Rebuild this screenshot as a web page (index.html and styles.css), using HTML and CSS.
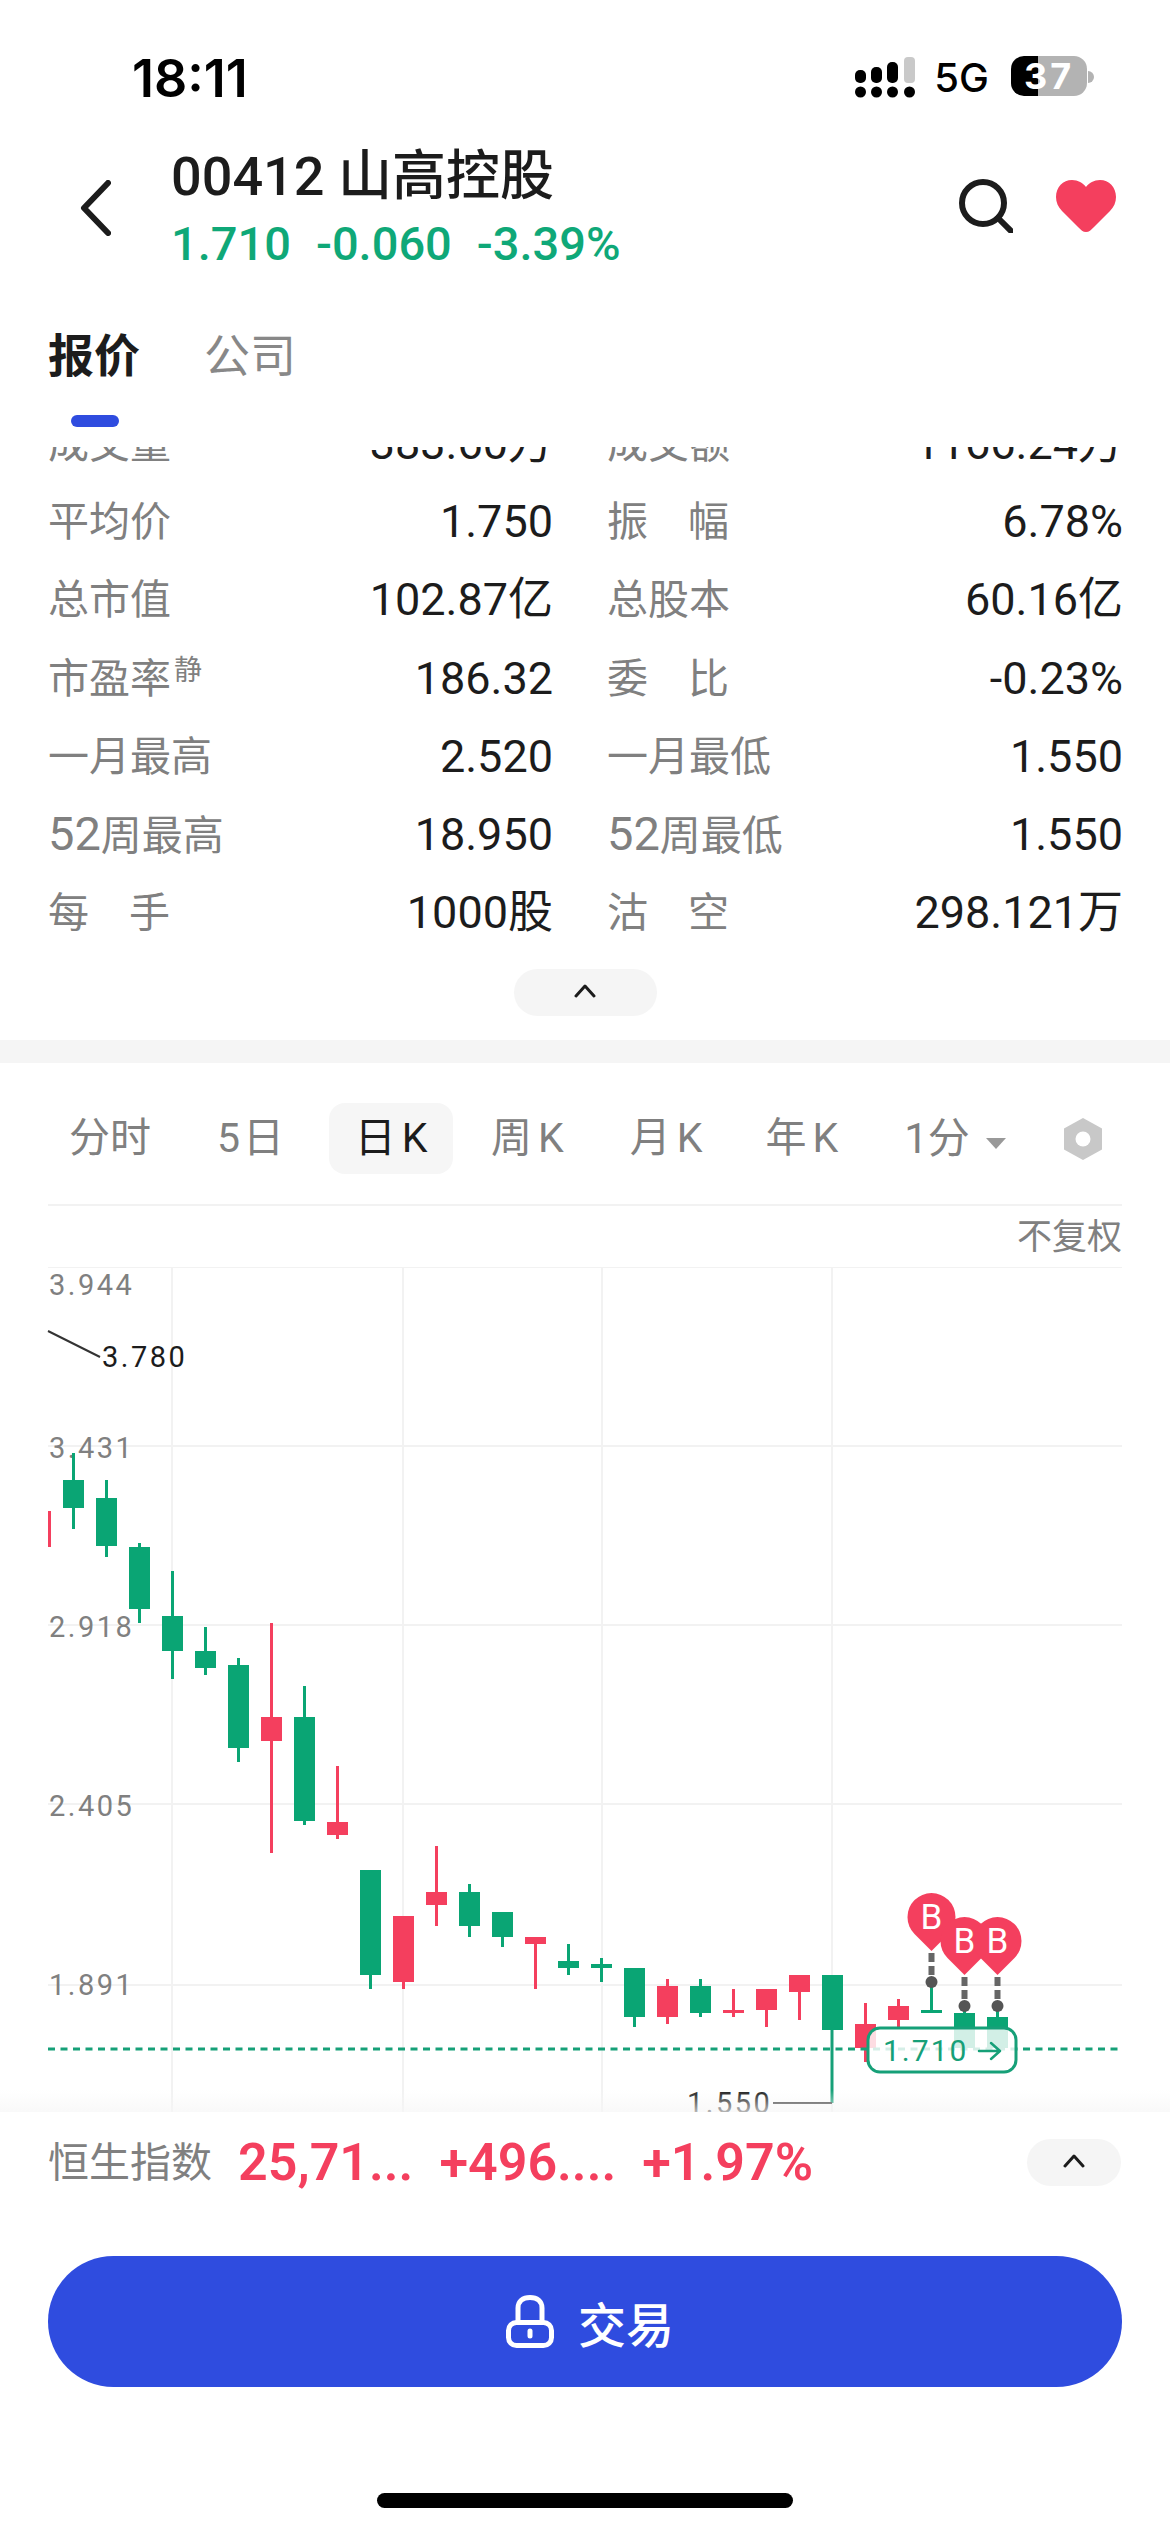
FILE: index.html
```html
<!DOCTYPE html>
<html lang="zh-CN">
<head>
  <meta charset="UTF-8">
  <meta name="viewport" content="width=device-width, initial-scale=1.0">
  <title>00412 山高控股</title>
  <link rel="stylesheet" href="styles.css">
</head>
<body>
  <div class="status-bar">
    <span class="clock">18:11</span>
    <div class="status-icons">
      <svg class="signal" width="60" height="44" viewBox="0 0 60 44">
        <rect x="0" y="14" width="11" height="13" rx="5"/>
        <rect x="16" y="11" width="11" height="16" rx="5"/>
        <rect x="32" y="6" width="11" height="21" rx="5"/>
        <rect class="signal-off" x="49" y="1" width="11" height="26" rx="4"/>
        <circle cx="5.5" cy="36" r="5.5"/>
        <circle cx="21.5" cy="36" r="5.5"/>
        <circle cx="37.5" cy="36" r="5.5"/>
        <circle cx="54.5" cy="36" r="5.5"/>
      </svg>
      <span class="network">5G</span>
      <div class="battery"><span class="battery-level">37</span></div>
      <span class="battery-tip"></span>
    </div>
  </div>

  <header class="stock-head">
    <svg class="back" width="31" height="56" viewBox="0 0 31 56">
      <path d="M28 3 L4 28 L28 53"/>
    </svg>
    <div class="stock-title">
      <div class="stock-name">00412 山高控股</div>
      <div class="stock-price"><span>1.710</span><span>-0.060</span><span>-3.39%</span></div>
    </div>
    <svg class="search" width="54" height="54" viewBox="0 0 54 54">
      <circle cx="24" cy="24" r="21"/>
      <path d="M39 39 L52 52"/>
    </svg>
    <svg class="heart" width="60" height="52" viewBox="0 0 60 52">
      <path d="M30 52 C27 52 25 50 22 47 L6 31 C2 27 0 22 0 17 C0 7 7 0 16 0 C22 0 27 3 30 7 C33 3 38 0 44 0 C53 0 60 7 60 17 C60 22 58 27 54 31 L38 47 C35 50 33 52 30 52 Z"/>
    </svg>
  </header>

  <nav class="tabs">
    <div class="tab tab-active">报价<span class="tab-mark"></span></div>
    <div class="tab">公司</div>
  </nav>

  <section class="stats">
    <div class="stats-grid">
      <div class="stat"><span class="stat-label">成交量</span><span class="stat-value">383.60万</span></div>
      <div class="stat"><span class="stat-label">成交额</span><span class="stat-value">1166.24万</span></div>
      <div class="stat"><span class="stat-label">平均价</span><span class="stat-value">1.750</span></div>
      <div class="stat"><span class="stat-label spread"><i>振</i><i>幅</i></span><span class="stat-value">6.78%</span></div>
      <div class="stat"><span class="stat-label">总市值</span><span class="stat-value">102.87亿</span></div>
      <div class="stat"><span class="stat-label">总股本</span><span class="stat-value">60.16亿</span></div>
      <div class="stat"><span class="stat-label">市盈率<sup>静</sup></span><span class="stat-value">186.32</span></div>
      <div class="stat"><span class="stat-label spread"><i>委</i><i>比</i></span><span class="stat-value">-0.23%</span></div>
      <div class="stat"><span class="stat-label">一月最高</span><span class="stat-value">2.520</span></div>
      <div class="stat"><span class="stat-label">一月最低</span><span class="stat-value">1.550</span></div>
      <div class="stat"><span class="stat-label"><b>52</b>周最高</span><span class="stat-value">18.950</span></div>
      <div class="stat"><span class="stat-label"><b>52</b>周最低</span><span class="stat-value">1.550</span></div>
      <div class="stat"><span class="stat-label spread"><i>每</i><i>手</i></span><span class="stat-value">1000股</span></div>
      <div class="stat"><span class="stat-label spread"><i>沽</i><i>空</i></span><span class="stat-value">298.121万</span></div>
    </div>
  </section>

  <div class="collapse-row">
    <button class="collapse-btn">
      <svg width="22" height="14" viewBox="0 0 22 14"><path d="M2 12 L11 2 L20 12"/></svg>
    </button>
  </div>

  <div class="band"></div>

  <nav class="periods">
    <span class="period period-minute">分时</span>
    <span class="period period-five">5日</span>
    <span class="period period-day">日K</span>
    <span class="period period-week">周K</span>
    <span class="period period-month">月K</span>
    <span class="period period-year">年K</span>
    <span class="period period-tick">1分<i class="caret"></i></span>
    <svg class="chart-settings" width="38" height="42" viewBox="0 0 38 42">
      <path d="M19 0 L38 10.5 V31.5 L19 42 L0 31.5 V10.5 Z"/>
      <circle cx="19" cy="21" r="7.5"/>
    </svg>
  </nav>

  <div class="adjust-row">不复权</div>

  <div class="chart">
    <svg id="kline" width="1170" height="845" viewBox="0 1267 1170 845"></svg>
    <div class="chart-fade"></div>
  </div>

  <div class="index-bar">
    <span class="index-name">恒生指数</span>
    <span class="index-num index-last">25,71...</span>
    <span class="index-num index-change">+496....</span>
    <span class="index-num index-rate">+1.97%</span>
    <button class="index-toggle">
      <svg width="22" height="14" viewBox="0 0 22 14"><path d="M2 12 L11 2 L20 12"/></svg>
    </button>
  </div>

  <div class="trade-row">
    <button class="trade-btn">
      <svg width="48" height="53" viewBox="0 0 48 53">
        <rect x="2.5" y="27.5" width="43" height="23" rx="8"/>
        <path d="M12 27 V13 C12 6 17 2.5 24 2.5 C31 2.5 36 6 36 13 V27"/>
        <path d="M24 36 V41"/>
      </svg>
      <span>交易</span>
    </button>
  </div>

  <div class="home-row"><span class="home-bar"></span></div>

  <script src="chart.js"></script>
</body>
</html>
```

FILE: styles.css
```css
/* General */
* {
  box-sizing: border-box;
}

html, body {
  margin: 0;
  padding: 0;
}

body {
  width: 1170px;
  height: 2532px;
  overflow: hidden;
  background: #fff;
  color: #1c1c1c;
  font-family: "Roboto", "Noto Sans CJK SC", sans-serif;
}

button {
  border: none;
  padding: 0;
  font-family: inherit;
}

/* Status bar */
.status-bar {
  height: 136px;
  padding: 53px 76px 0 132px;
  display: flex;
  justify-content: space-between;
  align-items: flex-start;
}

.clock {
  font-family: "Inter", sans-serif;
  font-size: 52px;
  line-height: 52px;
  font-weight: 600;
  color: #000;
}

.status-icons {
  display: flex;
  align-items: flex-start;
  margin-top: 3px;
}

.signal {
  fill: #000;
  margin-right: 19px;
}

.signal .signal-off {
  fill: #c9c9c9;
}

.network {
  font-family: "Inter", sans-serif;
  font-size: 40px;
  line-height: 40px;
  font-weight: 500;
  color: #000;
  margin-right: 22px;
  margin-top: 2px;
}

.battery {
  width: 76px;
  height: 40px;
  border-radius: 13px;
  background: linear-gradient(90deg, #000 36%, #b3b3b3 36%);
  text-align: center;
}

.battery-level {
  display: block;
  font-family: "Inter", sans-serif;
  font-size: 36px;
  line-height: 40px;
  font-weight: 700;
  letter-spacing: 3px;
  color: #fff;
}

.battery-tip {
  width: 6px;
  height: 12px;
  margin: 15px 0 0 1px;
  background: #b3b3b3;
  border-radius: 0 6px 6px 0;
}

/* Stock header */
.stock-head {
  height: 144px;
  padding: 0 54px 0 80px;
  display: flex;
  align-items: center;
}

.back {
  fill: none;
  stroke: #1c1c1c;
  stroke-width: 6;
  stroke-linecap: round;
  stroke-linejoin: round;
  margin-right: 60px;
}

.stock-title {
  flex: 1;
  margin-top: 4px;
}

.stock-name {
  font-size: 54px;
  line-height: 68px;
  font-weight: 500;
  color: #1c1c1c;
}

.stock-price {
  display: flex;
  gap: 25px;
  font-size: 47px;
  line-height: 66px;
  font-weight: 500;
  color: #0fa878;
}

.search {
  fill: none;
  stroke: #1c1c1c;
  stroke-width: 6;
  stroke-linecap: round;
  margin-right: 43px;
  margin-bottom: 5px;
}

.heart {
  fill: #f43f5e;
  margin-bottom: 4px;
}

/* Tabs */
.tabs {
  height: 167px;
  padding: 45px 48px 0;
  display: flex;
  align-items: flex-start;
  gap: 64px;
}

.tab {
  position: relative;
  font-size: 46px;
  line-height: 62px;
  color: #888;
}

.tab-active {
  font-weight: 700;
  color: #1c1c1c;
}

.tab-mark {
  position: absolute;
  left: 23px;
  top: 90px;
  width: 48px;
  height: 12px;
  border-radius: 6px;
  background: #2f4cdf;
}

/* Quote table */
.stats {
  height: 502px;
  overflow: hidden;
}

.stats-grid {
  margin-top: -42px;
  padding-left: 48px;
  display: grid;
  grid-template-columns: 505px 516px;
  column-gap: 54px;
  grid-auto-rows: 78.2px;
}

.stat {
  display: flex;
  justify-content: space-between;
  align-items: center;
}

.stat-label {
  position: relative;
  font-size: 41px;
  line-height: 48px;
  color: #808080;
}

.stat-label b {
  font-size: 47px;
  font-weight: 400;
}

.stat-label sup {
  position: absolute;
  left: 126px;
  top: 1px;
  font-size: 28px;
  line-height: 30px;
}

.spread {
  width: 122px;
  display: flex;
  justify-content: space-between;
}

.spread i {
  font-style: normal;
}

.stat-value {
  font-size: 45px;
  line-height: 48px;
  color: #1c1c1c;
}

/* Collapse handle under the table */
.collapse-row {
  height: 91px;
  padding-top: 20px;
  display: flex;
  justify-content: center;
}

.collapse-btn {
  width: 143px;
  height: 47px;
  border-radius: 24px;
  background: #f5f5f5;
}

.collapse-btn svg,
.index-toggle svg {
  fill: none;
  stroke: #1c1c1c;
  stroke-width: 3;
  stroke-linecap: round;
  stroke-linejoin: round;
}

.band {
  height: 23px;
  background: #f5f5f5;
}

/* K line period tabs */
.periods {
  position: relative;
  height: 143px;
  margin: 0 48px;
  padding-top: 40px;
  display: flex;
  align-items: flex-start;
  border-bottom: 2px solid #f2f2f2;
}

.period {
  height: 71px;
  font-size: 41px;
  line-height: 71px;
  color: #808080;
  white-space: nowrap;
  letter-spacing: 6px;
}

.period-minute { margin-left: 21px; letter-spacing: 0; }
.period-five { margin-left: 66px; letter-spacing: 3px; }
.period-week { margin-left: 38px; }
.period-month { margin-left: 60px; }
.period-year { margin-left: 57px; }
.period-tick { margin-left: 60px; letter-spacing: 0; font-size: 42px; }

.period-day {
  width: 124px;
  margin-left: 42px;
  padding-left: 6px;
  border-radius: 16px;
  background: #f6f6f6;
  color: #1c1c1c;
  text-align: center;
}

.caret {
  display: inline-block;
  width: 0;
  height: 0;
  margin-left: 16px;
  vertical-align: 4px;
  border-left: 10px solid transparent;
  border-right: 10px solid transparent;
  border-top: 11px solid #999;
}

.chart-settings {
  margin-left: 58px;
  margin-top: 15px;
  fill: #c8c8c8;
}

.chart-settings circle {
  fill: #fff;
}

.adjust-row {
  height: 61px;
  padding: 8px 48px 0 0;
  text-align: right;
  font-size: 35px;
  line-height: 48px;
  color: #808080;
}

/* Chart canvas */
.chart {
  position: relative;
  height: 845px;
}

.chart svg {
  display: block;
}

.chart-fade {
  position: absolute;
  left: 0;
  right: 0;
  bottom: 0;
  height: 22px;
  background: linear-gradient(180deg, rgba(246, 246, 246, 0), rgba(246, 246, 246, 0.7));
}

.grid-line {
  stroke: #f2f2f2;
  stroke-width: 2;
}

.axis-price {
  font-size: 29px;
  fill: #808080;
  letter-spacing: 2.5px;
}

.mark-price {
  font-size: 29px;
  fill: #1c1c1c;
  letter-spacing: 2.5px;
}

.mark-line {
  stroke: #333;
  stroke-width: 2;
  fill: none;
}

.wick-up { fill: #f43f5e; }
.wick-down { fill: #0aa574; }

.last-line {
  stroke: #16a078;
  stroke-width: 3;
  stroke-dasharray: 7 5.5;
}

.low-line {
  stroke: #16a078;
  stroke-width: 3;
  fill: none;
}

.trade-stem {
  stroke: #666;
  stroke-width: 6;
  stroke-dasharray: 9 4;
}

.trade-dot { fill: #555; }
.trade-pin { fill: #f43f5e; }

.trade-letter {
  font-size: 35px;
  fill: #fff;
  text-anchor: middle;
}

.last-box {
  fill: rgba(255, 255, 255, 0.82);
  stroke: #16a078;
  stroke-width: 3;
}

.last-price {
  font-size: 30px;
  fill: #16a078;
  letter-spacing: 2px;
}

.last-arrow {
  fill: none;
  stroke: #16a078;
  stroke-width: 2.5;
  stroke-linecap: round;
  stroke-linejoin: round;
}

/* Index strip */
.index-bar {
  height: 144px;
  padding: 27px 49px 0 48px;
  display: flex;
  align-items: flex-start;
  background: #fff;
}

.index-name {
  font-size: 41px;
  line-height: 48px;
  color: #808080;
  margin-right: 26px;
}

.index-num {
  font-size: 52px;
  line-height: 48px;
  font-weight: 600;
  color: #f43f5e;
  margin-right: 26px;
  white-space: nowrap;
}

.index-toggle {
  margin-left: auto;
  width: 94px;
  height: 47px;
  border-radius: 24px;
  background: #f5f5f5;
}

/* Trade button */
.trade-row {
  padding: 0 48px;
}

.trade-btn {
  width: 1074px;
  height: 131px;
  padding-left: 10px;
  border-radius: 66px;
  background: #2f4cdf;
  color: #fff;
  font-size: 48px;
  font-weight: 500;
  display: flex;
  justify-content: center;
  align-items: center;
  gap: 24px;
}

.trade-btn svg {
  fill: none;
  stroke: #fff;
  stroke-width: 5;
  stroke-linecap: round;
}

/* Home indicator */
.home-row {
  padding-top: 106px;
  display: flex;
  justify-content: center;
}

.home-bar {
  width: 416px;
  height: 15px;
  border-radius: 8px;
  background: #000;
}
```

FILE: chart.js
```js
const NS = 'http://www.w3.org/2000/svg';
const svg = document.getElementById('kline');

function add(tag, attrs, text, parent) {
  const el = document.createElementNS(NS, tag);
  for (const key in attrs) el.setAttribute(key, attrs[key]);
  if (text) el.textContent = text;
  (parent || svg).appendChild(el);
  return el;
}

// Plot area clip, the first candle runs off the left edge
const defs = add('defs', {});
const clip = add('clipPath', { id: 'plot' }, null, defs);
add('rect', { x: 48, y: 1267, width: 1076, height: 845 }, null, clip);

// Grid
[1267, 1446, 1625, 1804, 1985].forEach(y => {
  add('line', { class: 'grid-line', x1: 48, x2: 1122, y1: y, y2: y });
});
[172, 403, 602, 832].forEach(x => {
  add('line', { class: 'grid-line', x1: x, x2: x, y1: 1267, y2: 2112 });
});

// Price axis
[['3.944', 1295], ['3.431', 1458], ['2.918', 1637], ['2.405', 1816], ['1.891', 1995]].forEach(([label, y]) => {
  add('text', { class: 'axis-price', x: 49, y: y }, label);
});

// [wick top, wick bottom, body top, body bottom, up]
const candles = [
  [1511, 1547, 1511, 1547, true],
  [1453, 1529, 1480, 1508, false],
  [1480, 1557, 1498, 1546, false],
  [1543, 1623, 1547, 1609, false],
  [1571, 1679, 1616, 1651, false],
  [1627, 1675, 1651, 1668, false],
  [1658, 1762, 1665, 1748, false],
  [1623, 1853, 1717, 1741, true],
  [1686, 1825, 1717, 1821, false],
  [1766, 1839, 1822, 1835, true],
  [1870, 1989, 1870, 1975, false],
  [1916, 1989, 1916, 1982, true],
  [1846, 1926, 1892, 1905, true],
  [1884, 1937, 1892, 1926, false],
  [1912, 1947, 1912, 1937, false],
  [1937, 1989, 1937, 1944, true],
  [1944, 1975, 1961, 1968, false],
  [1958, 1982, 1964, 1968, false],
  [1968, 2027, 1968, 2017, false],
  [1979, 2024, 1986, 2017, true],
  [1979, 2017, 1986, 2013, false],
  [1989, 2017, 2010, 2013, true],
  [1989, 2027, 1989, 2010, true],
  [1975, 2020, 1975, 1992, true],
  [1975, 2030, 1975, 2030, false],
  [2003, 2062, 2024, 2048, true],
  [1999, 2027, 2006, 2020, true],
  [1982, 2013, 2010, 2013, false],
  [2006, 2048, 2013, 2048, false],
  [2007, 2048, 2017, 2048, false]
];

const plot = add('g', { 'clip-path': 'url(#plot)' });
candles.forEach((c, i) => {
  const x = 40.5 + 33 * i;
  const cls = c[4] ? 'wick-up' : 'wick-down';
  add('rect', { class: cls, x: x - 1.5, y: c[0], width: 3, height: c[1] - c[0] }, null, plot);
  add('rect', { class: cls, x: x - 10.5, y: c[2], width: 21, height: c[3] - c[2] }, null, plot);
});

// Highest mark
add('path', { class: 'mark-line', d: 'M48 1331 L100 1357' });
add('text', { class: 'mark-price', x: 102, y: 1367 }, '3.780');

// Last price line
add('line', { class: 'last-line', x1: 48, x2: 1123, y1: 2049, y2: 2049 });

// Lowest mark
add('path', { class: 'low-line', d: 'M832 2030 V2103' });
add('path', { class: 'mark-line', d: 'M773 2103 H832' });
add('text', { class: 'mark-price', x: 687, y: 2113 }, '1.550');

// Trade markers
[[931.5, 1917, 1982], [964.5, 1941, 2006], [997.5, 1941, 2006]].forEach(([x, cy, dot]) => {
  add('line', { class: 'trade-stem', x1: x, x2: x, y1: cy + 36, y2: dot });
  add('circle', { class: 'trade-dot', cx: x, cy: dot, r: 6 });
});
[[931.5, 1917], [964.5, 1941], [997.5, 1941]].forEach(([x, cy]) => {
  add('path', { class: 'trade-pin', d: `M${x} ${cy + 34} L${x - 17} ${cy + 17} A24 24 0 1 1 ${x + 17} ${cy + 17} Z` });
  add('text', { class: 'trade-letter', x: x, y: cy + 12 }, 'B');
});

// Last price tag
add('rect', { class: 'last-box', x: 868, y: 2028, width: 148, height: 44, rx: 12 });
add('text', { class: 'last-price', x: 883, y: 2061 }, '1.710');
add('path', { class: 'last-arrow', d: 'M979 2051 H1000 M991 2043 L1000 2051 L991 2059' });
```
